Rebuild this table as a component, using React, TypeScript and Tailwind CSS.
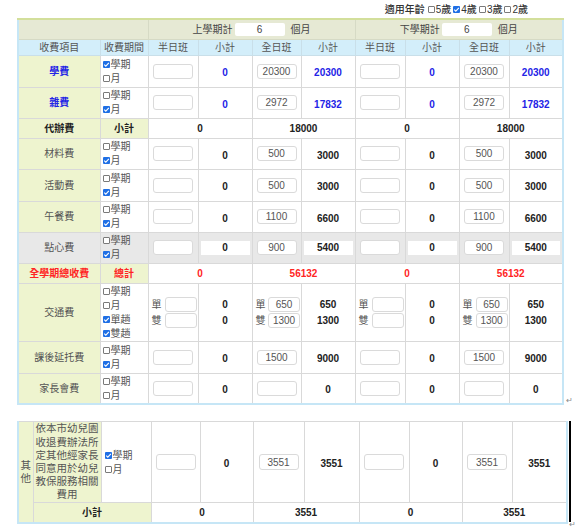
import React from 'react';

const font = "font-['Liberation_Sans','Noto_Sans_CJK_TC',sans-serif]";

function Box({ on }: { on?: boolean }) {
  if (on) {
    return (
      <span className="inline-flex h-[7px] w-[7px] items-center justify-center rounded-[1px] bg-[#1f6fe5]">
        <svg viewBox="0 0 8 8" className="h-[7px] w-[7px]">
          <path d="M1.4 4.1 3.2 5.9 6.7 2.1" fill="none" stroke="white" strokeWidth="1.3" />
        </svg>
      </span>
    );
  }
  return <span className="inline-block h-[7px] w-[7px] rounded-[1px] border border-[#7a7a7a] bg-white" />;
}

function Check({ on, label }: { on?: boolean; label: string }) {
  return (
    <div className="flex h-[14px] items-center gap-[1px] text-[10px] text-[#555]">
      <Box on={on} />
      <span>{label}</span>
    </div>
  );
}

function Field({ value = '', className = 'w-[40px]' }: { value?: string; className?: string }) {
  return (
    <div
      className={`mx-auto flex h-[15px] items-center justify-center rounded-[3px] border border-[#dadada] bg-white text-[10px] text-[#555] ${className}`}
    >
      {value}
    </div>
  );
}

function Sem({ label }: { label: string }) {
  return (
    <div className="flex items-center justify-center text-[10px] text-[#444]">
      <span>{label}</span>
      <span className="ml-[2px] flex h-[13px] w-[50px] items-center justify-center rounded-[2px] bg-white">6</span>
      <span className="ml-[6px]">個月</span>
    </div>
  );
}

const td = 'border border-[#d9d9d9] p-0 text-center align-middle';
const lab = 'border border-[#d9d9d9] bg-[#eef4cf] p-0 text-center align-middle';

type Row = {
  label: string;
  checks: [boolean, boolean];
  full: string;
  sub: string;
  tone?: 'blue' | 'gray';
  h: string;
};

const rows1: Row[] = [
  { label: '學費', checks: [true, false], full: '20300', sub: '20300', tone: 'blue', h: 'h-[32px]' },
  { label: '雜費', checks: [false, true], full: '2972', sub: '17832', tone: 'blue', h: 'h-[31px]' },
];

const rows2: Row[] = [
  { label: '材料費', checks: [false, true], full: '500', sub: '3000', h: 'h-[31px]' },
  { label: '活動費', checks: [false, true], full: '500', sub: '3000', h: 'h-[32px]' },
  { label: '午餐費', checks: [false, true], full: '1100', sub: '6600', h: 'h-[31px]' },
  { label: '點心費', checks: [false, true], full: '900', sub: '5400', tone: 'gray', h: 'h-[31px]' },
];

const rows3: Row[] = [
  { label: '課後延托費', checks: [false, true], full: '1500', sub: '9000', h: 'h-[32px]' },
  { label: '家長會費', checks: [false, false], full: '', sub: '0', h: 'h-[31px]' },
];

function Num({ v, tone, boxed }: { v: string; tone?: 'blue' | 'gray'; boxed?: boolean }) {
  const color = tone === 'blue' ? 'text-[#2323e6]' : 'text-[#222]';
  if (boxed) {
    return (
      <div className={`mx-[2px] flex h-[14px] items-center justify-center bg-white text-[10px] font-bold ${color}`}>{v}</div>
    );
  }
  return <span className={`text-[10px] font-bold ${color}`}>{v}</span>;
}

function FeeRow({ r }: { r: Row }) {
  const gray = r.tone === 'gray';
  const bg = gray ? 'bg-[#e8e8e8]' : '';
  const labelCls = r.tone === 'blue' ? 'font-bold text-[#2323e6]' : 'text-[#555]';
  return (
    <tr className={`${r.h} ${bg}`}>
      <td className={`${gray ? td : lab} text-[10px] ${labelCls}`}>{r.label}</td>
      <td className={`${td} pl-[2px] text-left`}>
        <Check on={r.checks[0]} label="學期" />
        <Check on={r.checks[1]} label="月" />
      </td>
      {[0, 1].map((s) => (
        <React.Fragment key={s}>
          <td className={td}>
            <Field />
          </td>
          <td className={td}>
            <Num v="0" tone={r.tone} boxed={gray} />
          </td>
          <td className={td}>
            <Field value={r.full} />
          </td>
          <td className={td}>
            <Num v={r.sub} tone={r.tone} boxed={gray} />
          </td>
        </React.Fragment>
      ))}
    </tr>
  );
}

function TotalRow({ a, b, c, red }: { a: string; b: string; c: string; red?: boolean }) {
  const color = red ? 'text-[#ff2424]' : 'text-[#222]';
  return (
    <tr className="h-[20px]">
      <td className={`${lab} text-[10px] font-bold ${color}`}>{a}</td>
      <td className={`${lab} text-[10px] font-bold ${color}`}>{b}</td>
      {[0, 1].map((s) => (
        <React.Fragment key={s}>
          <td colSpan={2} className={`${td} text-[10px] font-bold ${color}`}>0</td>
          <td colSpan={2} className={`${td} text-[10px] font-bold ${color}`}>{c}</td>
        </React.Fragment>
      ))}
    </tr>
  );
}

function TransportRow() {
  const pair = (a: string, b: string) => (
    <div className="flex flex-col gap-[1px] pl-[3px]">
      {[
        ['單', a],
        ['雙', b],
      ].map(([k, v]) => (
        <div key={k} className="flex items-center gap-[2px] text-[10px] text-[#555]">
          <span>{k}</span>
          <Field value={v} className="mx-0 w-[32px]" />
        </div>
      ))}
    </div>
  );
  const nums = (a: string, b: string) => (
    <div className="flex flex-col gap-[1px]">
      <div className="flex h-[15px] items-center justify-center">
        <Num v={a} />
      </div>
      <div className="flex h-[15px] items-center justify-center">
        <Num v={b} />
      </div>
    </div>
  );
  return (
    <tr className="h-[58px]">
      <td className={`${lab} text-[10px] text-[#555]`}>交通費</td>
      <td className={`${td} pl-[2px] text-left`}>
        <div className="flex flex-col">
          <Check label="學期" />
          <Check label="月" />
          <Check on label="單趟" />
          <Check on label="雙趟" />
        </div>
      </td>
      {[0, 1].map((s) => (
        <React.Fragment key={s}>
          <td className={`${td} text-left`}>{pair('', '')}</td>
          <td className={td}>{nums('0', '0')}</td>
          <td className={`${td} text-left`}>{pair('650', '1300')}</td>
          <td className={td}>{nums('650', '1300')}</td>
        </React.Fragment>
      ))}
    </tr>
  );
}

export default function App() {
  const hd = 'border border-[#c9dfe9] p-0 text-center align-middle text-[10px] font-normal text-[#555]';
  const h1 = 'border border-[#d6dac5] border-t-2 border-t-[#d3df9b] p-0 align-middle';
  return (
    <div className={`min-h-[531px] w-[582px] bg-white ${font}`}>
      <div className="flex h-[18px] items-center justify-end gap-[2px] pr-[54px] text-[10px] font-medium text-[#333]">
        <span className="mr-[1px]">適用年齡</span>
        <span className="flex items-center gap-[1px]"><Box />5歲</span>
        <span className="flex items-center gap-[1px]"><Box on />4歲</span>
        <span className="flex items-center gap-[1px]"><Box />3歲</span>
        <span className="flex items-center gap-[1px]"><Box />2歲</span>
      </div>

      <div className="flex items-end">
        <table className="ml-[17px] w-[546px] table-fixed border-collapse border-2 border-[#c6e6f6]">
          <colgroup>
            <col className="w-[82px]" />
            <col className="w-[48px]" />
            <col className="w-[50px]" />
            <col className="w-[54px]" />
            <col className="w-[49px]" />
            <col className="w-[54px]" />
            <col className="w-[50px]" />
            <col className="w-[54px]" />
            <col className="w-[50px]" />
            <col className="w-[54px]" />
          </colgroup>
          <tbody>
            <tr className="h-[20px] bg-[#e6e9d4]">
              <td colSpan={2} className={h1} />
              <td colSpan={4} className={h1}>
                <Sem label="上學期計" />
              </td>
              <td colSpan={4} className={h1}>
                <Sem label="下學期計" />
              </td>
            </tr>
            <tr className="h-[16px] bg-[#d3eefa]">
              {['收費項目', '收費期間', '半日班', '小計', '全日班', '小計', '半日班', '小計', '全日班', '小計'].map((t, i) => (
                <th key={i} className={hd}>
                  {t}
                </th>
              ))}
            </tr>
            {rows1.map((r) => (
              <FeeRow key={r.label} r={r} />
            ))}
            <TotalRow a="代辦費" b="小計" c="18000" />
            {rows2.map((r) => (
              <FeeRow key={r.label} r={r} />
            ))}
            <TotalRow a="全學期總收費" b="總計" c="56132" red />
            <TransportRow />
            {rows3.map((r) => (
              <FeeRow key={r.label} r={r} />
            ))}
          </tbody>
        </table>
        <span className="ml-[2px] text-[8px] leading-[8px] text-[#888]">↵</span>
      </div>

      <div className="mt-[16px] flex items-start">
        <table className="ml-[17px] w-[550px] table-fixed border-collapse border-2 border-t-0 border-[#c6e6f6]">
          <colgroup>
            <col className="w-[15px]" />
            <col className="w-[68px]" />
            <col className="w-[50px]" />
            <col className="w-[49px]" />
            <col className="w-[53px]" />
            <col className="w-[51px]" />
            <col className="w-[55px]" />
            <col className="w-[50px]" />
            <col className="w-[53px]" />
            <col className="w-[50px]" />
            <col className="w-[55px]" />
          </colgroup>
          <tbody>
            <tr className="h-[81px]">
              <td rowSpan={2} className={`${lab} text-[10.5px] leading-[13px] text-[#555]`}>
                其<br />他
              </td>
              <td className={`${lab} text-[10.5px] leading-[13.2px] text-[#555]`}>
                依本市幼兒園收退費辦法所定其他經家長同意用於幼兒教保服務相關費用
              </td>
              <td className={`${td} pl-[3px] text-left`}>
                <Check on label="學期" />
                <Check label="月" />
              </td>
              {[0, 1].map((s) => (
                <React.Fragment key={s}>
                  <td className={td}>
                    <Field className="h-[16px] w-[40px]" />
                  </td>
                  <td className={td}>
                    <Num v="0" />
                  </td>
                  <td className={td}>
                    <Field value="3551" className="h-[16px] w-[40px]" />
                  </td>
                  <td className={td}>
                    <Num v="3551" />
                  </td>
                </React.Fragment>
              ))}
            </tr>
            <tr className="h-[20px]">
              <td colSpan={2} className={`${lab} text-[10px] font-bold text-[#222]`}>
                小計
              </td>
              <td colSpan={2} className={`${td} text-[10px] font-bold text-[#222]`}>0</td>
              <td colSpan={2} className={`${td} text-[10px] font-bold text-[#222]`}>3551</td>
              <td colSpan={2} className={`${td} text-[10px] font-bold text-[#222]`}>0</td>
              <td colSpan={2} className={`${td} text-[10px] font-bold text-[#222]`}>3551</td>
            </tr>
          </tbody>
        </table>
        <div className="flex flex-col items-start">
          <div className="ml-[1px] h-[101px] w-[2px] bg-black" />
          <span className="ml-[1px] text-[8px] leading-[6px] text-[#888]">↵</span>
        </div>
      </div>
    </div>
  );
}
